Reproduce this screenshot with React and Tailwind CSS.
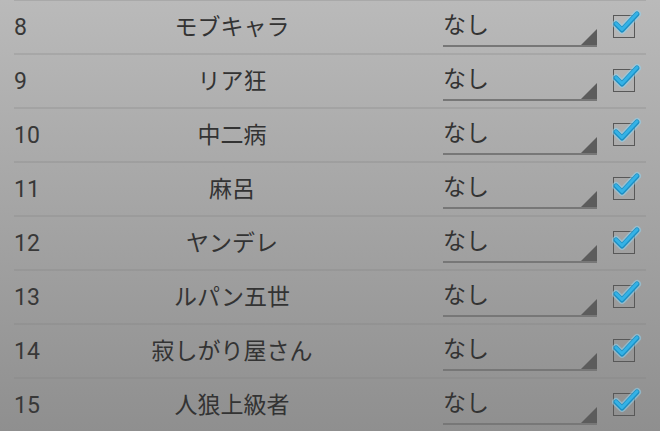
const rows = [
  [8, "モブキャラ"],
  [9, "リア狂"],
  [10, "中二病"],
  [11, "麻呂"],
  [12, "ヤンデレ"],
  [13, "ルパン五世"],
  [14, "寂しがり屋さん"],
  [15, "人狼上級者"],
];

function Check() {
  return (
    <div className="relative w-[22px] h-[23px] border-[1.5px] border-[#585858]">
      <svg
        className="absolute left-[-2px] top-[-7px]"
        width="32"
        height="28"
        viewBox="0 0 32 28"
      >
        <path d="M4 15 L10 21 L25 5" fill="none" stroke="#8fd3f0" strokeOpacity="0.55" strokeWidth="8" strokeLinecap="round" strokeLinejoin="round" />
        <path d="M4 15 L10 21 L25 5" fill="none" stroke="#1b8fc4" strokeWidth="5" strokeLinecap="round" strokeLinejoin="round" />
        <path d="M4 14.5 L10 20.5 L25 4.5" fill="none" stroke="#35b2e6" strokeWidth="3" strokeLinecap="round" strokeLinejoin="round" />
      </svg>
    </div>
  );
}

export default function App() {
  return (
    <div
      className="w-[660px] h-[431px] overflow-hidden bg-gradient-to-b from-[#bababa] to-[#8f8f8f] px-[14px]"
      style={{ fontFamily: "Roboto, 'Noto Sans CJK JP', sans-serif" }}
    >
      <div className="mt-[-1px] border-t-2 border-[#a2a2a2]/70" />
      {rows.map(([n, name]) => (
        <div key={n} className="h-[54px] flex items-start border-b-2 border-[#7f7f7f]/25">
          <div className="w-[60px] text-[23px] leading-[30px] text-[#383838] mt-[12px]">{n}</div>
          <div className="w-[316px] text-center text-[23px] leading-[30px] text-[#333] mt-[12px]">{name}</div>
          <div className="ml-[53px] w-[154px] h-[36px] relative border-b-2 border-[#777] mt-[10px]">
            <div className="text-[23px] text-[#333] leading-[30px]">なし</div>
            <svg className="absolute right-0 bottom-0" width="16" height="16" viewBox="0 0 16 16">
              <polygon points="16,0 16,16 0,16" fill="#5c5c5c" />
            </svg>
          </div>
          <div className="ml-[16px] mt-[14px]">
            <Check />
          </div>
        </div>
      ))}
    </div>
  );
}
